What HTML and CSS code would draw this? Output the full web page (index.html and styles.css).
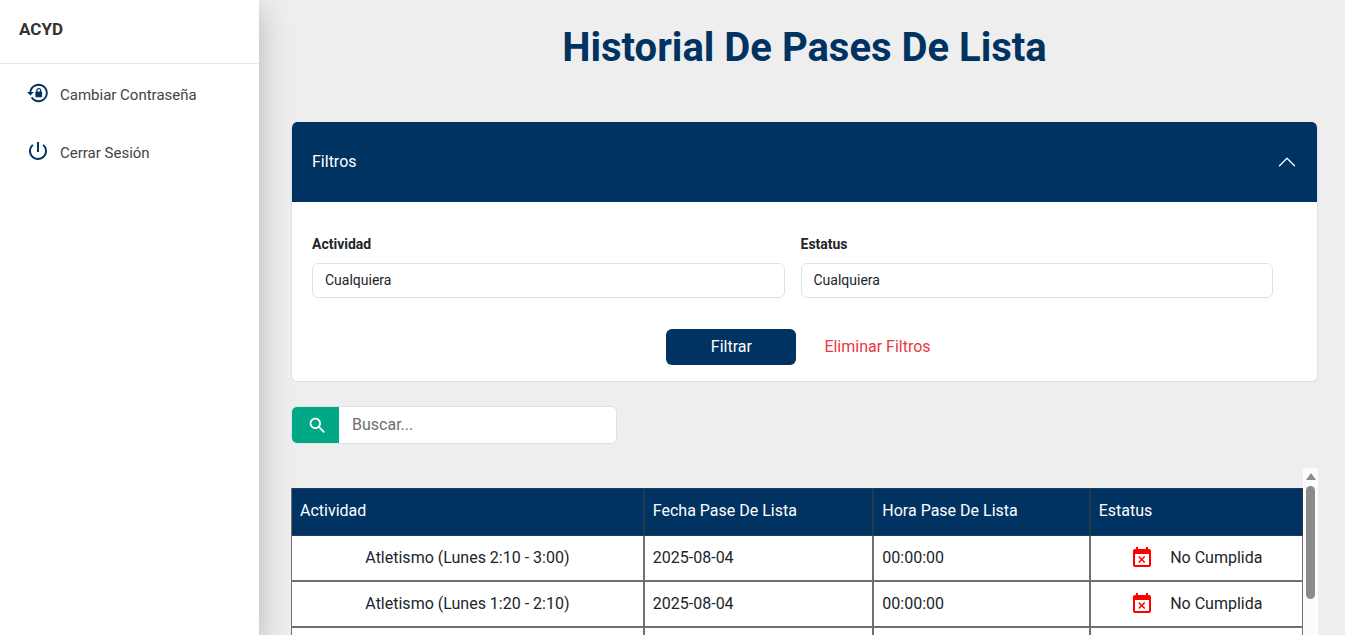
FILE: index.html
```html
<!DOCTYPE html>
<html lang="es">
<head>
<meta charset="utf-8">
<meta name="viewport" content="width=device-width, initial-scale=1">
<title>Historial De Pases De Lista</title>
<link rel="stylesheet" href="styles.css">
</head>
<body>
<div class="layout">
  <aside class="sidebar">
    <div class="brand">ACYD</div>
    <nav class="menu">
      <a class="menu-item" href="#">
        <span class="menu-icon"><svg width="22" height="22" viewBox="0 0 24 24" aria-hidden="true"><path d="M12.63,2C18.16,2 22.64,6.5 22.64,12C22.64,17.5 18.16,22 12.63,22C9.12,22 6.05,20.18 4.26,17.43L5.84,16.18C7.25,18.47 9.76,20 12.64,20A8,8 0 0,0 20.64,12A8,8 0 0,0 12.64,4C8.56,4 5.2,7.06 4.71,11H7.47L3.73,14.73L0,11H2.69C3.19,5.95 7.45,2 12.63,2M15.59,10.24C16.09,10.25 16.5,10.65 16.5,11.16V15.77C16.5,16.27 16.09,16.69 15.58,16.69H10.05C9.54,16.69 9.13,16.27 9.13,15.77V11.16C9.13,10.65 9.54,10.25 10.04,10.24V9.23C10.04,7.7 11.29,6.46 12.81,6.46C14.34,6.46 15.59,7.7 15.59,9.23V10.24M12.81,7.86C12.06,7.86 11.44,8.47 11.44,9.23V10.24H14.19V9.23C14.19,8.47 13.57,7.86 12.81,7.86Z"/></svg></span>
        <span class="menu-label">Cambiar Contraseña</span>
      </a>
      <a class="menu-item" href="#">
        <span class="menu-icon"><svg width="24" height="24" viewBox="0 0 24 24" aria-hidden="true"><path d="M13 3h-2v10h2V3zm4.83 2.17l-1.42 1.42C17.99 7.86 19 9.81 19 12c0 3.87-3.13 7-7 7s-7-3.13-7-7c0-2.19 1.01-4.14 2.58-5.42L6.17 5.17C4.23 6.82 3 9.26 3 12c0 4.97 4.03 9 9 9s9-4.03 9-9c0-2.74-1.23-5.18-3.17-6.83z"/></svg></span>
        <span class="menu-label">Cerrar Sesión</span>
      </a>
    </nav>
  </aside>

  <main class="main">
    <h1 class="title">Historial De Pases De Lista</h1>

    <section class="card">
      <button class="card-header" type="button" aria-expanded="true">
        <span>Filtros</span>
        <svg width="20" height="20" viewBox="0 0 16 16" aria-hidden="true"><path d="M14 11 8 5l-6 6" fill="none" stroke="currentColor" stroke-linecap="round" stroke-linejoin="round"/></svg>
      </button>
      <form class="card-body">
        <div class="fields">
          <div class="field">
            <label for="actividad">Actividad</label>
            <select id="actividad"><option>Cualquiera</option></select>
          </div>
          <div class="field">
            <label for="estatus">Estatus</label>
            <select id="estatus"><option>Cualquiera</option></select>
          </div>
        </div>
        <div class="actions">
          <button class="btn-primary" type="button">Filtrar</button>
          <button class="btn-link" type="button">Eliminar Filtros</button>
        </div>
      </form>
    </section>

    <div class="search">
      <button class="search-button" type="button" aria-label="Buscar"><svg width="21" height="21" viewBox="0 0 24 24" aria-hidden="true"><path fill="currentColor" d="M15.5 14h-.79l-.28-.27C15.41 12.59 16 11.11 16 9.5 16 5.91 13.09 3 9.5 3S3 5.91 3 9.5 5.91 16 9.5 16c1.61 0 3.09-.59 4.23-1.57l.27.28v.79l5 4.99L20.49 19l-4.99-5zm-6 0C7.01 14 5 11.99 5 9.5S7.01 5 9.5 5 14 7.01 14 9.5 11.99 14 9.5 14z"/></svg></button>
      <input class="search-input" type="text" placeholder="Buscar..." aria-label="Buscar">
    </div>

    <div class="table-area">
      <div class="table-scroll">
        <table class="table">
          <colgroup><col class="col-activity"><col class="col-date"><col class="col-time"><col></colgroup>
          <thead>
            <tr><th>Actividad</th><th>Fecha Pase De Lista</th><th>Hora Pase De Lista</th><th>Estatus</th></tr>
          </thead>
          <tbody>
            <tr>
              <td class="activity">Atletismo (Lunes 2:10 - 3:00)</td><td>2025-08-04</td><td>00:00:00</td>
              <td><div class="status"><svg width="24" height="24" viewBox="0 0 24 24" aria-hidden="true"><path d="M9.31 17l2.44-2.44L14.19 17l1.06-1.06-2.44-2.44 2.44-2.44L14.19 10l-2.44 2.44L9.31 10l-1.06 1.06 2.44 2.44-2.44 2.44L9.31 17zM19 3h-1V1h-2v2H8V1H6v2H5c-1.11 0-1.99.9-1.99 2L3 19c0 1.1.89 2 2 2h14c1.1 0 2-.9 2-2V5c0-1.1-.9-2-2-2zm0 16H5V8h14v11z"/></svg><span>No Cumplida</span></div></td>
            </tr>
            <tr>
              <td class="activity">Atletismo (Lunes 1:20 - 2:10)</td><td>2025-08-04</td><td>00:00:00</td>
              <td><div class="status"><svg width="24" height="24" viewBox="0 0 24 24" aria-hidden="true"><path d="M9.31 17l2.44-2.44L14.19 17l1.06-1.06-2.44-2.44 2.44-2.44L14.19 10l-2.44 2.44L9.31 10l-1.06 1.06 2.44 2.44-2.44 2.44L9.31 17zM19 3h-1V1h-2v2H8V1H6v2H5c-1.11 0-1.99.9-1.99 2L3 19c0 1.1.89 2 2 2h14c1.1 0 2-.9 2-2V5c0-1.1-.9-2-2-2zm0 16H5V8h14v11z"/></svg><span>No Cumplida</span></div></td>
            </tr>
            <tr><td></td><td></td><td></td><td></td></tr>
          </tbody>
        </table>
      </div>
      <div class="scrollbar" aria-hidden="true">
        <span class="scroll-arrow"></span>
        <span class="scroll-thumb"></span>
      </div>
    </div>
  </main>
</div>
</body>
</html>
```

FILE: styles.css
```css
:root {
  --navy: #003262;
  --line: #dee2e6;
  --text: #212529;
  --grid: #6f7074;
}

* { box-sizing: border-box; }

body {
  margin: 0;
  font: 16px/24px Roboto, sans-serif;
  color: var(--text);
  background: #eeeeef;
}

button, select, input { font: inherit; color: inherit; }
svg { display: block; flex: none; }

.layout {
  display: flex;
  height: 100vh;
  overflow: hidden;
}

/* Sidebar */
.sidebar {
  flex: none;
  width: 259px;
  background: #fff;
  box-shadow: 0 10px 30px rgba(0, 0, 0, 0.25);
}

.brand {
  height: 64px;
  padding: 17px 19px;
  border-bottom: 1px solid #e9e9ea;
  font-size: 17px;
  font-weight: 700;
  color: #333;
}

.menu { display: grid; }

.menu-item {
  display: flex;
  align-items: center;
  gap: 10px;
  height: 58px;
  padding: 0 26px;
  font-size: 15px;
  color: #444;
  text-decoration: none;
}

.menu-label { padding-top: 4px; }

.menu-icon {
  display: grid;
  place-items: center;
  width: 24px;
  height: 24px;
}

.menu-icon svg { fill: var(--navy); }

/* Main column */
.main {
  display: flex;
  flex: 1;
  flex-direction: column;
  min-width: 0;
  padding: 0 27px 0 32px;
}

.title {
  margin: 24px 0 50px;
  font-size: 40px;
  line-height: 48px;
  font-weight: 700;
  text-align: center;
  color: var(--navy);
}

.card {
  flex: none;
  border: 1px solid var(--line);
  border-top: 0;
  border-radius: 6px;
  background: #fff;
  overflow: hidden;
}

.card-header {
  display: flex;
  align-items: center;
  justify-content: space-between;
  width: 100%;
  height: 80px;
  padding: 0 20px;
  border: 0;
  background: var(--navy);
  color: #fff;
}

.card-body { padding: 32px 20px 16px; }

.fields {
  display: grid;
  grid-template-columns: 1fr 1fr;
  gap: 16px;
  padding-right: 24px;
}

.field {
  display: grid;
  gap: 8px;
  font-size: 14px;
  line-height: 21px;
}

.field label { font-weight: 700; }

.field select {
  width: 100%;
  height: 35px;
  padding: 0 12px;
  border: 1px solid var(--line);
  border-radius: 6px;
  background: #fff;
  appearance: none;
}

.actions {
  display: flex;
  justify-content: center;
  gap: 16px;
  margin-top: 31px;
}

.btn-primary {
  width: 130px;
  height: 36px;
  border: 0;
  border-radius: 6px;
  background: var(--navy);
  color: #fff;
}

.btn-link {
  padding: 0 12px;
  border: 0;
  background: none;
  color: #ea3943;
}

/* Search */
.search {
  display: flex;
  flex: none;
  width: 326px;
  height: 38px;
  margin: 24px 0;
  border: 1px solid var(--line);
  border-radius: 6px;
  background: #fff;
  overflow: hidden;
}

.search-button {
  display: grid;
  place-items: center;
  width: 47px;
  padding: 0 0 0 3px;
  border: 0;
  background: #00a886;
  color: #fff;
}

.search-input {
  flex: 1;
  min-width: 0;
  padding: 0 13px;
  border: 0;
  background: none;
}

.search-input::placeholder { color: #6c6e72; opacity: 1; }

/* Table */
.table-area {
  display: flex;
  flex: 1;
  min-height: 0;
}

.table-scroll {
  flex: 1;
  padding-top: 20px;
  overflow: hidden;
}

.table {
  width: 100%;
  table-layout: fixed;
  border-collapse: separate;
  border-spacing: 0;
  border-left: 1px solid var(--grid);
  background: #fff;
}

.col-activity { width: 34.9%; }
.col-date { width: 22.7%; }
.col-time { width: 21.4%; }

.table th,
.table td {
  height: 46px;
  padding: 0 8px;
  border: solid var(--grid);
  border-width: 0 2px 2px 0;
  text-align: left;
}

.table th {
  height: 48px;
  padding-bottom: 3px;
  border-width: 1px 2px 1px 0;
  border-color: #263a4d;
  background: var(--navy);
  color: #fff;
  font-weight: 400;
}

.table th:last-child,
.table td:last-child { border-right-width: 1px; }

.table td.activity { text-align: center; }

.status {
  display: flex;
  align-items: center;
  justify-content: center;
  gap: 16px;
}

.status svg { fill: #f00; }

.scrollbar {
  display: flex;
  flex-direction: column;
  align-items: center;
  gap: 6px;
  width: 15px;
  padding-top: 5px;
  background: #fcfcfc;
}

.scroll-arrow {
  border: 5px solid transparent;
  border-top: 0;
  border-bottom: 7px solid #8b8b8b;
}

.scroll-thumb {
  width: 9px;
  height: 113px;
  border-radius: 5px;
  background: #8b8b8b;
}
```
